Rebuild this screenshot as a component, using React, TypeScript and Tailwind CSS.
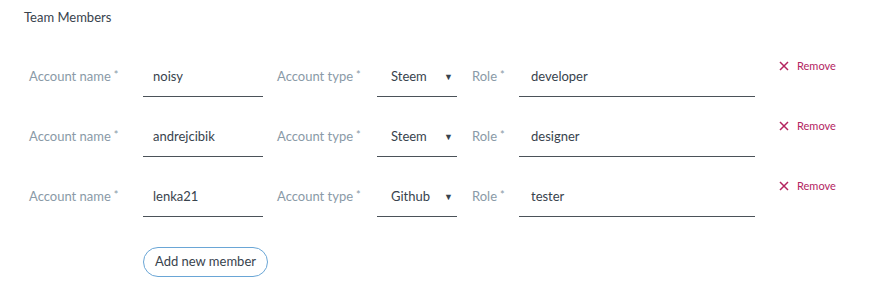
import React from 'react';

interface Member {
  name: string;
  type: string;
  role: string;
}

const members: Member[] = [
  { name: 'noisy', type: 'Steem', role: 'developer' },
  { name: 'andrejcibik', type: 'Steem', role: 'designer' },
  { name: 'lenka21', type: 'Github', role: 'tester' },
];

const Label: React.FC<{ text: string; className?: string }> = ({ text, className = '' }) => (
  <div className={`shrink-0 text-[13px] text-[#8a9aa7] ${className}`}>
    {text}
    <span className="relative -top-[2px] ml-[3px] text-[11px]">*</span>
  </div>
);

const MemberRow: React.FC<{ member: Member }> = ({ member }) => {
  return (
    <div className="flex h-10 items-start pl-[5px]">
      {/* Account name */}
      <Label text="Account name" className="w-[114px] pt-[10px]" />
      <div className="flex h-10 w-[120px] shrink-0 items-center border-b border-[#4b5259] pl-[10px] text-[13px] text-[#38434d]">
        {member.name}
      </div>

      {/* Account type */}
      <Label text="Account type" className="ml-[14px] w-[100px] pt-[10px]" />
      <div className="flex h-10 w-[80px] shrink-0 items-center justify-between border-b border-[#4b5259] pl-[14px] pr-[4px] text-[13px] text-[#38434d]">
        <span>{member.type}</span>
        <span className="text-[9px] text-[#38434d]">▼</span>
      </div>

      {/* Role */}
      <Label text="Role" className="ml-[15px] w-[47px] pt-[10px]" />
      <div className="flex h-10 w-[236px] shrink-0 items-center border-b border-[#4b5259] pl-[12px] text-[13px] text-[#38434d]">
        {member.role}
      </div>

      {/* Remove */}
      <button className="ml-6 flex items-center gap-[8px] pt-[1px] text-[11px] text-[#b3245f]">
        <svg width="10" height="10" viewBox="0 0 10 10" fill="none" stroke="currentColor" strokeWidth="1.5">
          <path d="M1 1L9 9M9 1L1 9" />
        </svg>
        Remove
      </button>
    </div>
  );
};

export default function App() {
  return (
    <div className="h-[288px] w-[880px] bg-white px-6 pt-[7px] font-['Lato',sans-serif]">
      <h2 className="text-[13px] leading-5 text-[#38434d]">Team Members</h2>

      <div className="mt-[30px] flex flex-col gap-5">
        {members.map((m) => (
          <MemberRow key={m.name} member={m} />
        ))}
      </div>

      <div className="mt-[30px] pl-[119px]">
        <button className="h-[30px] w-[125px] rounded-full border border-[#6aa6d6] text-[13px] text-[#38434d]">
          Add new member
        </button>
      </div>
    </div>
  );
}
